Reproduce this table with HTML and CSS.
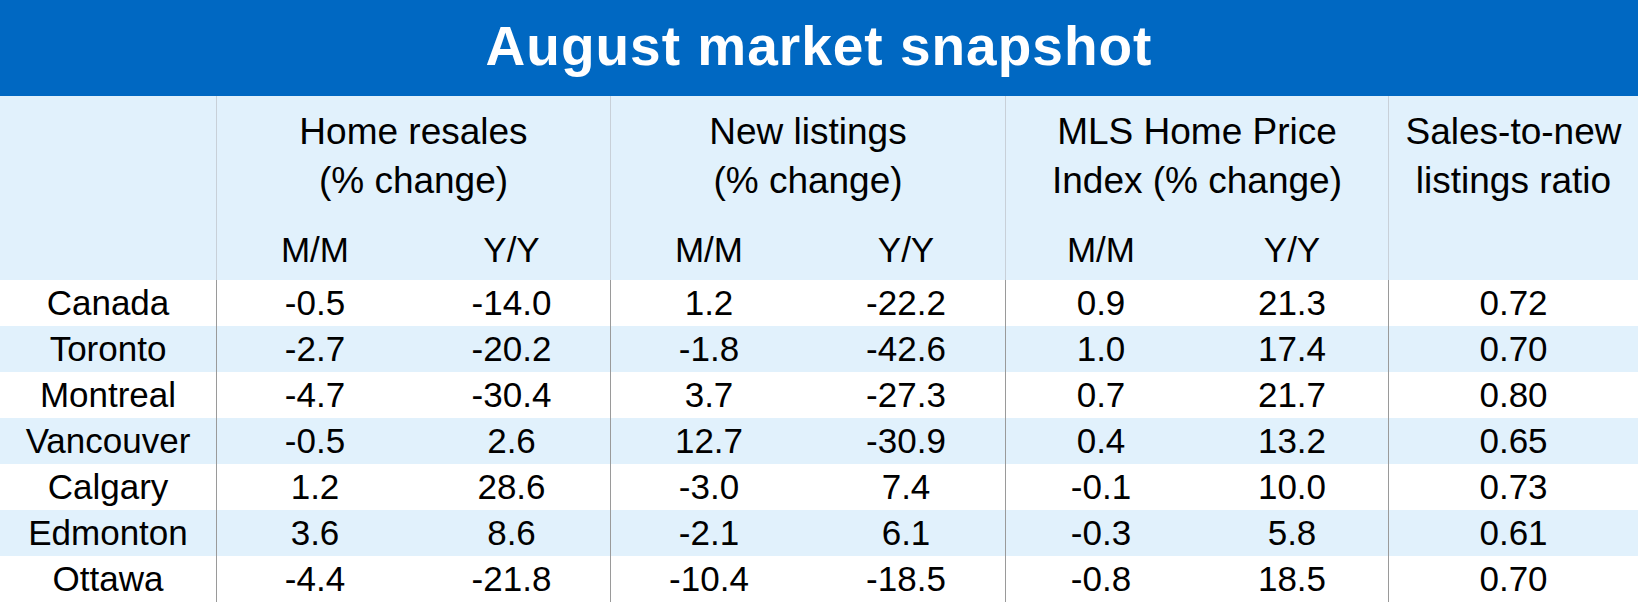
FILE: index.html
```html
<!DOCTYPE html>
<html lang="en">
<head>
<meta charset="utf-8">
<title>August market snapshot</title>
<link rel="stylesheet" href="styles.css">
</head>
<body>
<div class="snapshot">
  <div class="banner">August market snapshot</div>
  <div class="head">
    <div class="hcell corner"></div>
    <div class="hcell group g1 sep">Home resales<br>(% change)</div>
    <div class="hcell group g2 sep">New listings<br>(% change)</div>
    <div class="hcell group g3 sep">MLS Home Price<br>Index (% change)</div>
    <div class="hcell ratio sep">Sales-to-new<br>listings ratio</div>
    <div class="hcell sub c2 sep">M/M</div>
    <div class="hcell sub c3">Y/Y</div>
    <div class="hcell sub c4 sep">M/M</div>
    <div class="hcell sub c5">Y/Y</div>
    <div class="hcell sub c6 sep">M/M</div>
    <div class="hcell sub c7">Y/Y</div>
  </div>
  <div class="row">
    <div class="cell">Canada</div><div class="cell sep">-0.5</div><div class="cell">-14.0</div><div class="cell sep">1.2</div><div class="cell">-22.2</div><div class="cell sep">0.9</div><div class="cell">21.3</div><div class="cell sep">0.72</div>
  </div>
  <div class="row alt">
    <div class="cell">Toronto</div><div class="cell sep">-2.7</div><div class="cell">-20.2</div><div class="cell sep">-1.8</div><div class="cell">-42.6</div><div class="cell sep">1.0</div><div class="cell">17.4</div><div class="cell sep">0.70</div>
  </div>
  <div class="row">
    <div class="cell">Montreal</div><div class="cell sep">-4.7</div><div class="cell">-30.4</div><div class="cell sep">3.7</div><div class="cell">-27.3</div><div class="cell sep">0.7</div><div class="cell">21.7</div><div class="cell sep">0.80</div>
  </div>
  <div class="row alt">
    <div class="cell">Vancouver</div><div class="cell sep">-0.5</div><div class="cell">2.6</div><div class="cell sep">12.7</div><div class="cell">-30.9</div><div class="cell sep">0.4</div><div class="cell">13.2</div><div class="cell sep">0.65</div>
  </div>
  <div class="row">
    <div class="cell">Calgary</div><div class="cell sep">1.2</div><div class="cell">28.6</div><div class="cell sep">-3.0</div><div class="cell">7.4</div><div class="cell sep">-0.1</div><div class="cell">10.0</div><div class="cell sep">0.73</div>
  </div>
  <div class="row alt">
    <div class="cell">Edmonton</div><div class="cell sep">3.6</div><div class="cell">8.6</div><div class="cell sep">-2.1</div><div class="cell">6.1</div><div class="cell sep">-0.3</div><div class="cell">5.8</div><div class="cell sep">0.61</div>
  </div>
  <div class="row">
    <div class="cell">Ottawa</div><div class="cell sep">-4.4</div><div class="cell">-21.8</div><div class="cell sep">-10.4</div><div class="cell">-18.5</div><div class="cell sep">-0.8</div><div class="cell">18.5</div><div class="cell sep">0.70</div>
  </div>
</div>
</body>
</html>
```
FILE: styles.css
```css
html, body {
  margin: 0;
  padding: 0;
  background: #ffffff;
}

.snapshot {
  width: 1638px;
  height: 602px;
  overflow: hidden;
  font-family: "Liberation Sans", Arial, sans-serif;
  color: #000000;
}

.banner {
  height: 96px;
  box-sizing: border-box;
  padding-bottom: 4px;
  line-height: 92px;
  background: #0068c2;
  color: #ffffff;
  font-weight: bold;
  font-size: 55px;
  letter-spacing: 1px;
  text-align: center;
}

.head,
.row {
  display: grid;
  grid-template-columns: 216px 197px 197px 197px 198px 191px 192px 250px;
}

.head {
  grid-template-rows: 120px 64px;
  background: #e1f1fc;
}

.hcell {
  box-sizing: border-box;
  text-align: center;
}

.head .sep {
  border-left: 1px solid #c8d0d8;
}

.corner {
  grid-column: 1;
  grid-row: 1 / 3;
}

.group {
  grid-row: 1;
  font-size: 37px;
  line-height: 49px;
  padding-top: 11px;
}

.g1 { grid-column: 2 / 4; }
.g2 { grid-column: 4 / 6; }
.g3 { grid-column: 6 / 8; }

.ratio {
  grid-column: 8;
  grid-row: 1 / 3;
  font-size: 37px;
  line-height: 49px;
  padding-top: 11px;
}

.sub {
  grid-row: 2;
  font-size: 35px;
  line-height: 46px;
  padding-top: 11px;
}

.c2 { grid-column: 2; }
.c3 { grid-column: 3; }
.c4 { grid-column: 4; }
.c5 { grid-column: 5; }
.c6 { grid-column: 6; }
.c7 { grid-column: 7; }

.row {
  height: 46px;
  background: #ffffff;
}

.row.alt {
  background: #e1f1fc;
}

.cell {
  box-sizing: border-box;
  text-align: center;
  font-size: 35px;
  line-height: 46px;
  white-space: nowrap;
}

.row .sep {
  border-left: 1px solid #9a9a9a;
}
```
